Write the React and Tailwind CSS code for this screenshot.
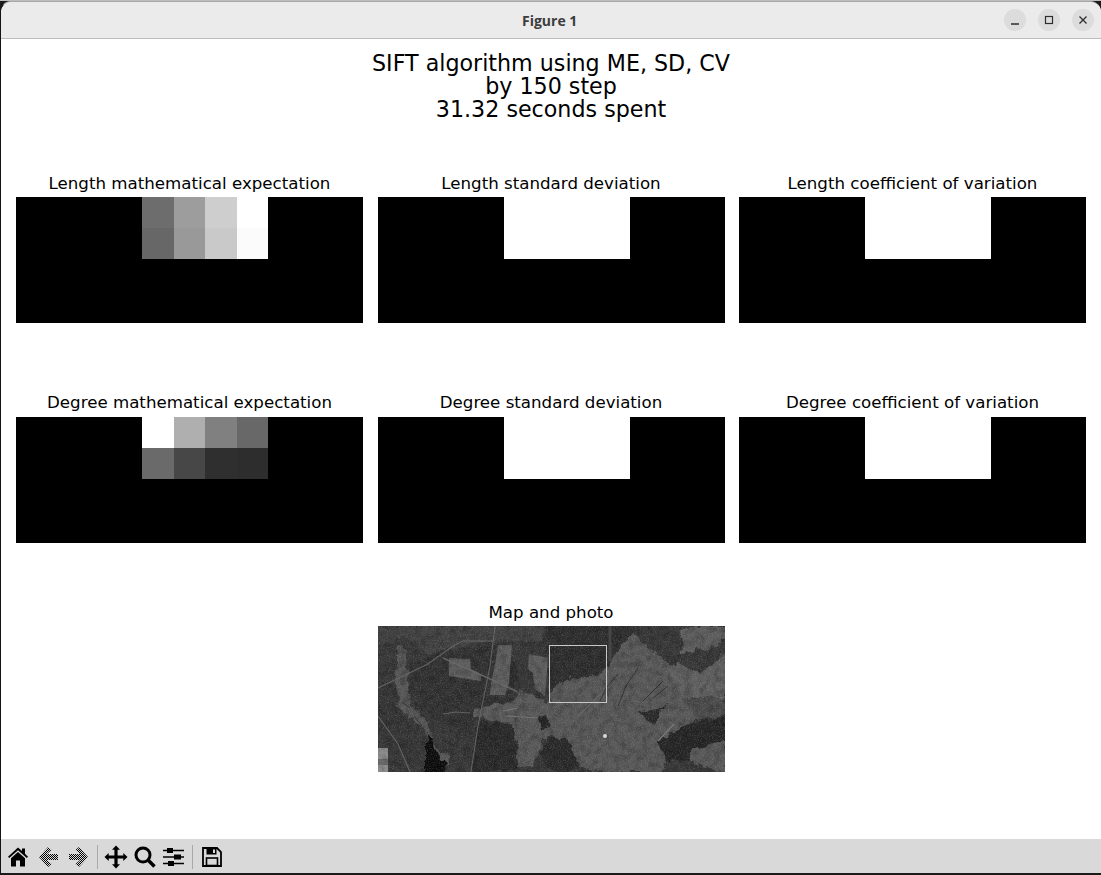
import React from "react";

const font = { fontFamily: '"DejaVu Sans", sans-serif' };

function Heat({ rows }) {
  return (
    <div className="grid h-[126px] w-full grid-cols-[126px_32px_31px_32px_31px_95px] grid-rows-[31px_31px_64px] bg-black">
      {rows.flatMap((row, r) => [
        <div key={`a${r}`} />,
        ...row.map((c, i) => <div key={`${r}-${i}`} style={{ backgroundColor: c }} />),
        <div key={`b${r}`} />,
      ])}
    </div>
  );
}

const W = "#ffffff";
const charts = [
  ["Length mathematical expectation", [["#6d6d6d", "#9d9d9d", "#cecece", W], ["#676767", "#999999", "#c9c9c9", "#fbfbfb"]]],
  ["Length standard deviation", [[W, W, W, W], [W, W, W, W]]],
  ["Length coefficient of variation", [[W, W, W, W], [W, W, W, W]]],
  ["Degree mathematical expectation", [[W, "#afafaf", "#808080", "#686868"], ["#6a6a6a", "#474747", "#2f2f2f", "#2d2d2d"]]],
  ["Degree standard deviation", [[W, W, W, W], [W, W, W, W]]],
  ["Degree coefficient of variation", [[W, W, W, W], [W, W, W, W]]],
];

function Chart({ title, rows, lower }) {
  return (
    <div className="flex flex-col">
      <div className={`${lower ? "mb-[4px]" : "mb-[3px]"} h-[20px] whitespace-nowrap text-center text-[16.67px] leading-[20px] text-black`}>{title}</div>
      <Heat rows={rows} />
    </div>
  );
}

function MapPhoto() {
  const shapes = [
    ["M0 0H165V16L130 14 90 18 50 30 30 12 0 20Z", "#424242"],
    ["M168 0H254L250 30 232 42 212 52 192 50 172 67Z", "#2d2d2d"],
    ["M30 40L70 22 118 20 112 70 130 72 140 82 97 84 95 110 60 95 40 80 30 60Z", "#323232"],
    ["M100 93L140 100 138 120 137 146 93 146Z", "#2c2c2c"],
    ["M0 70L20 60 22 88 40 105 30 146 10 123 0 95Z", "#363636"],
    ["M97 83L117 78 133 77 140 63 170 77 172 67 192 50 212 52 229 43 236 30 254 7 285 33 299 40 319 77 330 90 305 100 279 115 289 133 285 146 225 146 200 140 189 113 172 110 165 112 155 140 137 140 140 115 133 97 103 92 97 90Z", "#585858"],
    ["M302 7L312 0 347 0 347 13 332 23 304 27Z", "#5c5c5c"],
    ["M289 43L299 38 322 47 347 28 347 72 319 72 300 60Z", "#5e5e5e"],
    ["M347 72V92L320 92 305 72Z", "#4c4c4c"],
    ["M279 115L305 100 347 90 347 117 312 123 312 137 289 133Z", "#272727"],
    ["M312 123L347 115 347 146 312 137Z", "#585858"],
    ["M262 87L279 83 292 75 279 88 279 100 268 92Z", "#2b2b2b"],
    ["M172 110L189 113 202 140 192 146 172 146 162 125Z", "#2c2c2c"],
    ["M132 30L140 50 136 66 130 58Z", "#2a2a2a"],
    ["M160 92L168 88 172 100 162 105Z", "#252525"],
    ["M20 20L27 20 29 62 34 80 44 90 54 107 56 118 70 130 70 140 57 127 44 100 20 83 18 50Z", "#565656"],
    ["M50 107L55 113 57 123 67 137 68 146 47 146 47 133Z", "#111111"],
  ];
  const crisp = [
    ["M71 32L92 33 93 43 103 48 103 55 71 50Z", "#5c5c5c"],
    ["M120 19L134 19 131 57 127 69 112 69 113 57 117 40Z", "#5c5c5c"],
    ["M151 28L170 32 167 70 157 63 155 47 150 43Z", "#5c5c5c"],
    ["M0 122L10 122 10 146 0 146Z", "#8a8a8a"],
    ["M0 133H10V139H0Z", "#666666"],
  ];
  return (
    <svg viewBox="0 0 347 146" className="block h-[146px] w-[347px] bg-[#373737]">
      <defs>
        <filter id="grain" x="0" y="0" width="100%" height="100%">
          <feTurbulence type="fractalNoise" baseFrequency="0.85" numOctaves="2" seed="4" />
          <feColorMatrix values="0 0 0 0 0.62  0 0 0 0 0.62  0 0 0 0 0.62  1.6 0 0 0 -0.72" />
        </filter>
        <filter id="mottle" x="0" y="0" width="100%" height="100%">
          <feTurbulence type="fractalNoise" baseFrequency="0.14" numOctaves="4" seed="9" />
          <feColorMatrix values="0 0 0 0 0  0 0 0 0 0  0 0 0 0 0  1.5 0 0 0 -0.6" />
        </filter>
        <filter id="rough" x="-5%" y="-5%" width="110%" height="110%">
          <feTurbulence type="fractalNoise" baseFrequency="0.12" numOctaves="3" seed="3" result="n" />
          <feDisplacementMap in="SourceGraphic" in2="n" scale="9" xChannelSelector="R" yChannelSelector="G" />
          <feGaussianBlur stdDeviation="0.5" />
        </filter>
        <filter id="soft"><feGaussianBlur stdDeviation="0.55" /></filter>
      </defs>
      <g filter="url(#rough)">
        {shapes.map(([d, c], i) => <path key={i} d={d} fill={c} />)}
      </g>
      <g filter="url(#soft)">
        {crisp.map(([d, c], i) => <path key={i} d={d} fill={c} />)}
      </g>
      <rect width="347" height="146" filter="url(#mottle)" opacity="0.35" />
      <rect width="347" height="146" filter="url(#grain)" opacity="0.3" />
      <g fill="none" stroke="#686868" strokeWidth="1.1" opacity="0.9" filter="url(#soft)">
        <path d="M0 62L25 50 50 38 75 20 85 15 115 15" />
        <path d="M117 0L112 40 100 100 93 146" />
        <path d="M65 32L110 52 140 66" strokeWidth="1.5" />
        <path d="M0 90L20 118 32 146" />
        <path d="M232 0V35" strokeWidth="3" stroke="#4a4a4a" />
        <path d="M200 90L229 62" />
        <path d="M280 115L296 98" stroke="#808080" />
        <path d="M65 88L78 86 92 87" />
        <path d="M125 85L140 82M128 90L160 92" stroke="#787878" />
      </g>
      <g fill="none" stroke="#2a2a2a" strokeWidth="1" opacity="0.8" filter="url(#soft)">
        <path d="M24 76L32 82M36 90L44 100M140 66L142 56" />
        <path d="M240 48L228 62 222 75M260 42L248 60 240 80" />
        <path d="M265 75L285 55M290 60L275 72" />
      </g>
      <rect x="171.5" y="19.5" width="57" height="57" fill="none" stroke="#c8c8c8" strokeWidth="1" />
      <circle cx="227" cy="110" r="2" fill="#d8d8d8" />
    </svg>
  );
}

function Dither({ id }) {
  return (
    <pattern id={id} width="2" height="2" patternUnits="userSpaceOnUse">
      <rect width="1" height="1" fill="#000" />
      <rect x="1" y="1" width="1" height="1" fill="#000" />
    </pattern>
  );
}

function Toolbar() {
  return (
    <div className="flex h-[34px] items-center bg-[#d9d9d9] pl-[7px] pt-[2px]">
      <svg viewBox="0 0 20 20" className="h-[20px] w-[20px]">
        <path d="M10 .5L14 4V1.5H17V6.7L20 9.7 18.8 11 10 3.2 1.2 11 0 9.7Z" fill="#000" />
        <path d="M10 5L17 11.2V19.5H12V13.5H8V19.5H3V11.2Z" fill="#000" />
      </svg>
      <svg viewBox="0 0 20 20" className="ml-[11px] h-[20px] w-[20px]">
        <defs><Dither id="dl" /></defs>
        <path d="M9 0L12.5 3 8 7H19V13H8L12.5 17 9 20 0 10Z" fill="url(#dl)" />
      </svg>
      <svg viewBox="0 0 20 20" className="ml-[9px] h-[20px] w-[20px]">
        <defs><Dither id="dr" /></defs>
        <path d="M11 0L7.5 3 12 7H1V13H12L7.5 17 11 20 20 10Z" fill="url(#dr)" />
      </svg>
      <div className="ml-[9px] h-[24px] w-px bg-[#a8a8a8]" />
      <svg viewBox="0 0 24 24" className="ml-[6px] h-[24px] w-[24px]">
        <path d="M12 .5L16 4.7H13.6V10.4H19.3V8L23.5 12 19.3 16V13.6H13.6V19.3H16L12 23.5 8 19.3H10.4V13.6H4.7V16L.5 12 4.7 8V10.4H10.4V4.7H8Z" fill="#000" />
      </svg>
      <svg viewBox="0 0 22 22" className="ml-[6px] h-[22px] w-[22px]" fill="none" stroke="#000">
        <circle cx="9" cy="9" r="7" strokeWidth="3" />
        <path d="M14 14L20.5 20.5" strokeWidth="3.6" />
      </svg>
      <svg viewBox="0 0 21 20" className="ml-[7px] h-[20px] w-[21px]">
        <path d="M0 3.5H21M0 10H21M0 16.5H21" stroke="#000" strokeWidth="1.4" />
        <path d="M4 1H10V6H4ZM11 7.5H18V12.5H11ZM5 14H11V19H5Z" fill="#000" />
      </svg>
      <div className="ml-[8px] h-[24px] w-px bg-[#a8a8a8]" />
      <svg viewBox="0 0 20 20" className="ml-[9px] h-[20px] w-[20px]" fill="none" stroke="#000">
        <path d="M1 1H15L19 5V19H1Z" strokeWidth="1.8" />
        <path d="M4.5 1.5H14.5V7.5H4.5Z" fill="#000" stroke="none" />
        <path d="M11 2.5H13V6H11Z" fill="#d9d9d9" stroke="none" />
        <rect x="4.5" y="11" width="11" height="7.5" strokeWidth="1.6" />
      </svg>
    </div>
  );
}

function WinButton({ children }) {
  return (
    <div className="flex h-[22px] w-[22px] items-center justify-center rounded-full bg-[#dcdcdc]">
      <svg viewBox="0 0 22 22" className="h-[22px] w-[22px]" fill="none" stroke="#2e2e2e" strokeWidth="1">{children}</svg>
    </div>
  );
}

export default function App() {
  return (
    <div className="flex h-[875px] w-[1101px] flex-col overflow-hidden bg-[#1a1a1a]" style={font}>
      <div className="h-[1px] bg-[#bdbdbd]" />
      <div className="flex min-h-0 flex-1 flex-col overflow-hidden rounded-t-[11px] border-l border-t border-[#a8a8a8] border-l-[#141414] bg-white">
        <div className="flex h-[37px] items-center justify-between border-b border-[#bdbdbd] bg-[#ebebeb] pl-[510px] pr-[7px]">
          <div className="ml-[11px] whitespace-nowrap text-[14px] font-bold text-[#3d3d3d]" style={{ fontFamily: '"Open Sans", sans-serif' }}>Figure 1</div>
          <div className="flex gap-[12px]">
            <WinButton><path d="M7 15H15" strokeWidth="1.4" /></WinButton>
            <WinButton><rect x="7.5" y="7.5" width="7" height="7" strokeWidth="1.2" /></WinButton>
            <WinButton><path d="M7.5 7.5L14.5 14.5M14.5 7.5L7.5 14.5" strokeWidth="1.3" /></WinButton>
          </div>
        </div>
        <div className="flex flex-1 flex-col items-center px-[15px] pt-[13px]">
          <div className="h-[70px] whitespace-nowrap text-center text-[22.2px] leading-[23px] text-black">
            SIFT algorithm using ME, SD, CV<br />by 150 step<br />31.32 seconds spent
          </div>
          <div className="mt-[52px] grid w-[1070px] grid-cols-[347px_347px_347px] gap-x-[14.5px] gap-y-[70px]">
            {charts.map(([t, r], i) => <Chart key={t} title={t} rows={r} lower={i >= 3} />)}
          </div>
          <div className="mt-[60px] flex w-[347px] flex-col">
            <div className="mb-[3px] h-[20px] text-center text-[16.67px] leading-[20px] text-black">Map and photo</div>
            <MapPhoto />
          </div>
        </div>
        <Toolbar />
      </div>
      <div className="h-[2px] bg-[#1a1a1a]" />
    </div>
  );
}
